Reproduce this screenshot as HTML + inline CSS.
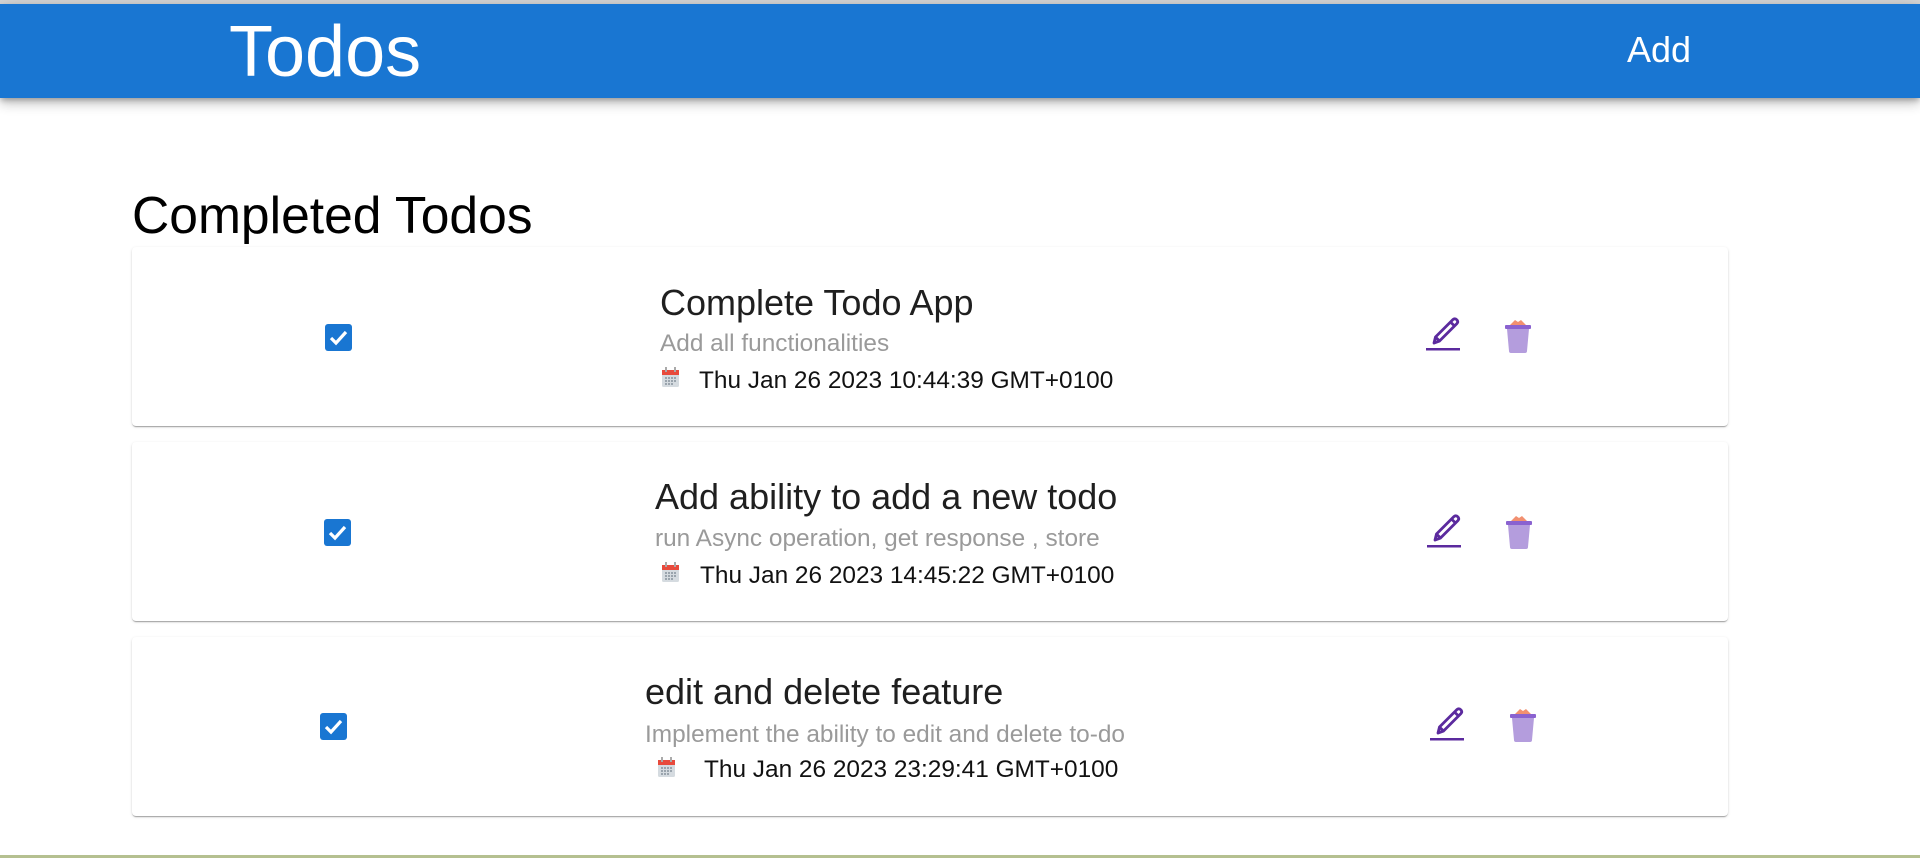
<!DOCTYPE html>
<html><head><meta charset="utf-8"><style>
*{margin:0;padding:0;box-sizing:border-box}
body{width:1920px;height:858px;background:#fff;font-family:"Liberation Sans",Arial,sans-serif;position:relative;overflow:hidden}
.topline{position:absolute;left:0;top:0;width:1920px;height:4px;background:#d6d6d6}
.hdr{position:absolute;left:0;top:4px;width:1920px;height:94px;background:#1976d2;box-shadow:0 3px 5px -1px rgba(0,0,0,.25),0 6px 10px 0 rgba(0,0,0,.16),0 1px 18px 0 rgba(0,0,0,.12)}
.abs{position:absolute;white-space:nowrap;line-height:1}
.card{position:absolute;left:132px;width:1596px;height:179px;background:#fff;border-radius:4px;box-shadow:0 2px 1px -1px rgba(0,0,0,.2),0 1px 1px 0 rgba(0,0,0,.14),0 1px 3px 0 rgba(0,0,0,.12)}
.t{font-size:36px;color:#1f1f1f}
.d{font-size:24.4px;color:#9a9a9a}
.dt{font-size:24.4px;color:#111}
.bottom{position:absolute;left:0;top:855px;width:1920px;height:3px;background:#b5c090}
</style></head><body>
<div class="topline"></div>
<div class="hdr"></div>
<div class="abs" style="left:229px;top:16px;font-size:72px;color:#fff">Todos</div>
<div class="abs" style="left:1627px;top:32px;font-size:36px;color:#fff">Add</div>
<div class="abs" style="left:132px;top:190px;font-size:51.6px;color:#000">Completed Todos</div>

<div class="card" style="top:247px"></div>
<div class="card" style="top:442px"></div>
<div class="card" style="top:637px"></div>

<svg width="0" height="0" style="position:absolute">
<defs>
<g id="chk"><rect width="27" height="27" rx="3" fill="#1976d2"/><path d="M6 14 L11 19 L21 8" stroke="#fff" stroke-width="3.2" fill="none"/></g>
<g id="cal"><rect x="1" y="3" width="17" height="17" rx="1.5" fill="#d5dbe0"/><rect x="1" y="3" width="17" height="5" fill="#e84a3c"/><rect x="4" y="0" width="2" height="5" fill="#aaa"/><rect x="13" y="0" width="2" height="5" fill="#aaa"/><g fill="#9aa4ad"><rect x="4" y="10" width="2" height="2"/><rect x="7" y="10" width="2" height="2"/><rect x="10" y="10" width="2" height="2"/><rect x="13" y="10" width="2" height="2"/><rect x="4" y="13" width="2" height="2"/><rect x="7" y="13" width="2" height="2"/><rect x="10" y="13" width="2" height="2"/><rect x="13" y="13" width="2" height="2"/><rect x="4" y="16" width="2" height="2"/><rect x="7" y="16" width="2" height="2"/><rect x="10" y="16" width="2" height="2"/></g></g>
<g id="pen"><path d="M8 27 L9.5 21 L27 3.5 Q29 2 31 4 Q32.5 6 31 7.5 L13.5 25 Z M9.5 21 L13.5 25 M24.5 6 L28.5 10" stroke="#5b2a9e" stroke-width="2.8" fill="none" stroke-linejoin="round"/><rect x="0" y="32" width="34" height="2.5" fill="#5b2a9e"/></g>
<g id="bin"><path d="M5 6 L11 0 L14 2 L17 0 L23 6 Z" fill="#f29070"/><rect x="1" y="5" width="26" height="4" rx="1" fill="#8a62d0"/><path d="M3 9 L25 9 L23 31 Q23 33 21 33 L7 33 Q5 33 5 31 Z" fill="#b49ddd"/></g>
</defs></svg>

<!-- card 1 -->
<svg class="abs" style="left:325px;top:324px" width="27" height="27"><use href="#chk"/></svg>
<div class="abs t" style="left:660px;top:285px">Complete Todo App</div>
<div class="abs d" style="left:660px;top:332px">Add all functionalities</div>
<svg class="abs" style="left:661px;top:367px" width="19" height="21"><use href="#cal"/></svg>
<div class="abs dt" style="left:699px;top:369px">Thu Jan 26 2023 10:44:39 GMT+0100</div>
<svg class="abs" style="left:1426px;top:316px" width="35" height="35"><use href="#pen"/></svg>
<svg class="abs" style="left:1504px;top:320px" width="28" height="34"><use href="#bin"/></svg>

<!-- card 2 -->
<svg class="abs" style="left:324px;top:519px" width="27" height="27"><use href="#chk"/></svg>
<div class="abs t" style="left:655px;top:479px">Add ability to add a new todo</div>
<div class="abs d" style="left:655px;top:527px">run Async operation, get response , store</div>
<svg class="abs" style="left:661px;top:562px" width="19" height="21"><use href="#cal"/></svg>
<div class="abs dt" style="left:700px;top:564px">Thu Jan 26 2023 14:45:22 GMT+0100</div>
<svg class="abs" style="left:1427px;top:513px" width="35" height="35"><use href="#pen"/></svg>
<svg class="abs" style="left:1505px;top:516px" width="28" height="34"><use href="#bin"/></svg>

<!-- card 3 -->
<svg class="abs" style="left:320px;top:713px" width="27" height="27"><use href="#chk"/></svg>
<div class="abs t" style="left:645px;top:674px">edit and delete feature</div>
<div class="abs d" style="left:645px;top:723px">Implement the ability to edit and delete to-do</div>
<svg class="abs" style="left:657px;top:757px" width="19" height="21"><use href="#cal"/></svg>
<div class="abs dt" style="left:704px;top:758px">Thu Jan 26 2023 23:29:41 GMT+0100</div>
<svg class="abs" style="left:1430px;top:706px" width="35" height="35"><use href="#pen"/></svg>
<svg class="abs" style="left:1509px;top:709px" width="28" height="34"><use href="#bin"/></svg>

<div class="bottom"></div>
</body></html>
